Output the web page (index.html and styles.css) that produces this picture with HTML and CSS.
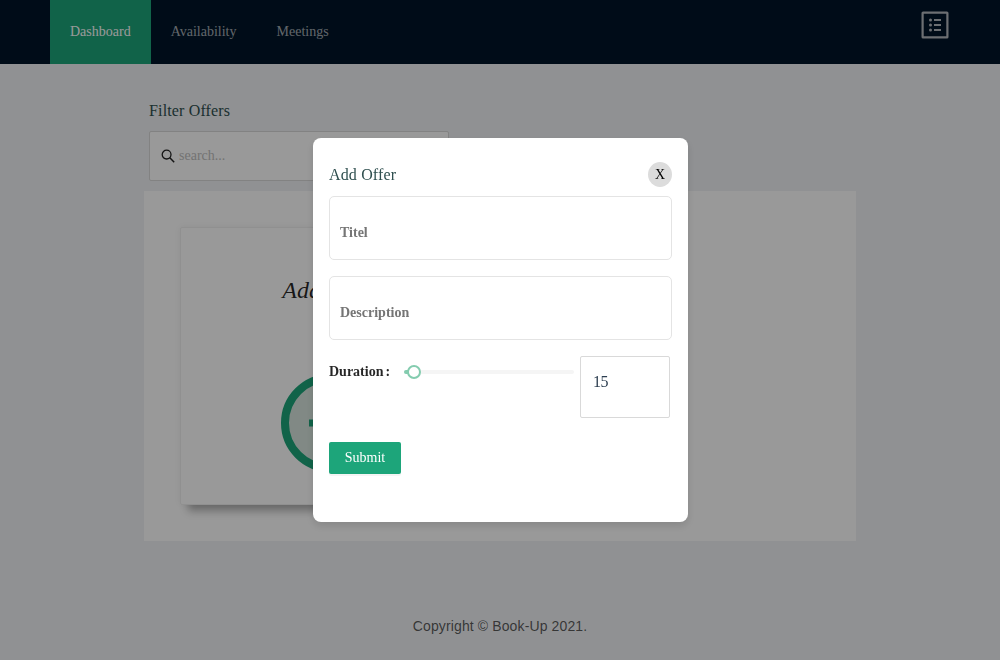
FILE: index.html
```html
<!DOCTYPE html>
<html lang="en">
<head>
<meta charset="utf-8">
<title>Book-Up</title>
<link rel="stylesheet" href="styles.css">
</head>
<body>
<header class="header">
  <nav class="nav">
    <a class="nav-item active">Dashboard</a>
    <a class="nav-item">Availability</a>
    <a class="nav-item">Meetings</a>
  </nav>
  <svg class="menu-icon" width="28" height="28" viewBox="0 0 28 28">
    <rect x="1.6" y="1.6" width="24.8" height="24.8" rx="0.5" fill="none" stroke="currentColor" stroke-width="2.2"/>
    <g fill="currentColor"><circle cx="9.5" cy="9" r="1.5"/><circle cx="9.5" cy="14" r="1.5"/><circle cx="9.5" cy="19" r="1.5"/>
    <rect x="13" y="8" width="7" height="2"/><rect x="13" y="13" width="7" height="2"/><rect x="13" y="18" width="7" height="2"/></g>
  </svg>
</header>
<main class="content">
  <section class="filter">
    <h2 class="label">Filter Offers</h2>
    <div class="search">
      <svg width="14" height="14" viewBox="0 0 14 14" fill="none" stroke="#222"><circle cx="5.6" cy="5.6" r="4.4" stroke-width="1.3"/><path d="M8.8 8.8L13.2 13.2" stroke-width="1.5"/></svg>
      <span>search...</span>
    </div>
  </section>
  <section class="panel">
    <article class="card">
      <h3 class="card-title">Add Offer</h3>
      <svg class="add" width="98" height="98" viewBox="0 0 98 98">
        <circle cx="49" cy="49" r="45" fill="#d7e5de" stroke="#1da57a" stroke-width="8"/>
        <path d="M28 49H70M49 28V70" stroke="#1da57a" stroke-width="7"/>
      </svg>
    </article>
  </section>
</main>
<footer class="footer">Copyright © Book-Up 2021.</footer>
<div class="overlay">
  <form class="modal">
    <div class="modal-head">
      <h2 class="label">Add Offer</h2>
      <button type="button" class="close">X</button>
    </div>
    <div class="field">Titel</div>
    <div class="field">Description</div>
    <div class="duration">
      <span class="duration-label">Duration<span class="colon">:</span></span>
      <div class="slider"><span class="fill"></span><span class="thumb"></span></div>
      <div class="number">15</div>
    </div>
    <button type="button" class="submit">Submit</button>
  </form>
</div>
</body>
</html>
```
FILE: styles.css
```css
* { box-sizing: border-box; }
body {
  margin: 0;
  height: 660px;
  overflow: hidden;
  display: flex;
  flex-direction: column;
  background: #f0f2f5;
  font: 14px/22px "Liberation Serif", "Times New Roman", serif;
  color: rgba(0, 0, 0, .85);
}
.header {
  height: 64px;
  flex: none;
  display: flex;
  justify-content: space-between;
  align-items: flex-start;
  padding: 0 51px 0 50px;
  background: #001529;
}
.nav { display: flex; }
.nav-item { padding: 0 20px; line-height: 64px; color: rgba(255, 255, 255, .65); }
.nav-item.active { background: #1da57a; color: #fff; }
.menu-icon { margin-top: 11px; color: #b5b9bf; }
.content { width: 712px; margin: 36px auto 0; }
.filter { padding: 0 5px; }
.label { margin: 0; font-size: 16px; font-weight: 400; line-height: 22px; letter-spacing: .15px; color: #2f4f4f; }
.search {
  display: flex;
  align-items: center;
  gap: 4px;
  width: 300px;
  height: 50px;
  margin-top: 9px;
  padding: 0 11px;
  background: #fff;
  border: 1px solid #d9d9d9;
  border-radius: 2px;
  color: #bfbfbf;
}
.panel { height: 350px; margin-top: 10px; padding: 36px; background: #fff; }
.card {
  display: flex;
  flex-direction: column;
  align-items: center;
  width: 300px;
  height: 278px;
  padding-top: 46px;
  border: 1px solid #f0f0f0;
  border-radius: 2px;
  box-shadow: 0 0 6px rgba(0, 0, 0, .06), 4px 10px 8px -4px rgba(0, 0, 0, .3);
}
.card-title { margin: 0; font-size: 24px; font-style: italic; font-weight: 400; line-height: 32px; }
.add { margin-top: 68px; }
.footer {
  margin-top: 74px;
  text-align: center;
  font-family: "Liberation Sans", Arial, sans-serif;
  letter-spacing: .12px;
  color: rgba(0, 0, 0, .65);
}
.overlay {
  position: fixed;
  inset: 0;
  display: flex;
  justify-content: center;
  align-items: center;
  padding-left: 1px;
  background: rgba(0, 0, 0, .4);
}
.modal {
  width: 375px;
  height: 384px;
  padding: 24px 16px;
  background: #fff;
  border-radius: 8px;
  box-shadow: 0 4px 8px rgba(0, 0, 0, .12);
}
.modal-head { display: flex; justify-content: space-between; align-items: center; height: 25px; margin-bottom: 9px; }
.close {
  width: 24px;
  height: 25px;
  padding: 0;
  border: 0;
  border-radius: 50%;
  background: #dcdcdc;
  color: #000;
  font: 14px/25px "Liberation Serif", serif;
}
.field {
  height: 64px;
  margin-bottom: 16px;
  padding: 25px 10px 0;
  border: 1px solid #e4e4e4;
  border-radius: 5px;
  font-weight: 700;
  color: #757575;
}
.duration { display: flex; height: 62px; }
.duration-label { width: 75px; padding-top: 5px; font-weight: 700; }
.colon { margin-left: 2px; }
.slider { position: relative; width: 170px; height: 4px; margin-top: 14px; border-radius: 2px; background: #f5f5f5; }
.fill { display: block; width: 10px; height: 4px; border-radius: 2px; background: #84ccaf; }
.thumb {
  position: absolute;
  left: 3px;
  top: -5px;
  width: 14px;
  height: 14px;
  border: 2px solid #84ccaf;
  border-radius: 50%;
  background: #fff;
}
.number {
  width: 90px;
  margin-left: 6px;
  padding: 14px 12px;
  border: 1px solid #d9d9d9;
  border-radius: 2px;
  font-size: 16px;
  letter-spacing: -.4px;
  color: #2c3e50;
}
.submit {
  width: 72px;
  height: 32px;
  margin-top: 24px;
  padding: 0;
  border: 0;
  border-radius: 2px;
  background: #1da57a;
  box-shadow: 0 2px 0 rgba(0, 0, 0, .045);
  color: #fff;
  font: 14px/30px "Liberation Serif", serif;
}
```
